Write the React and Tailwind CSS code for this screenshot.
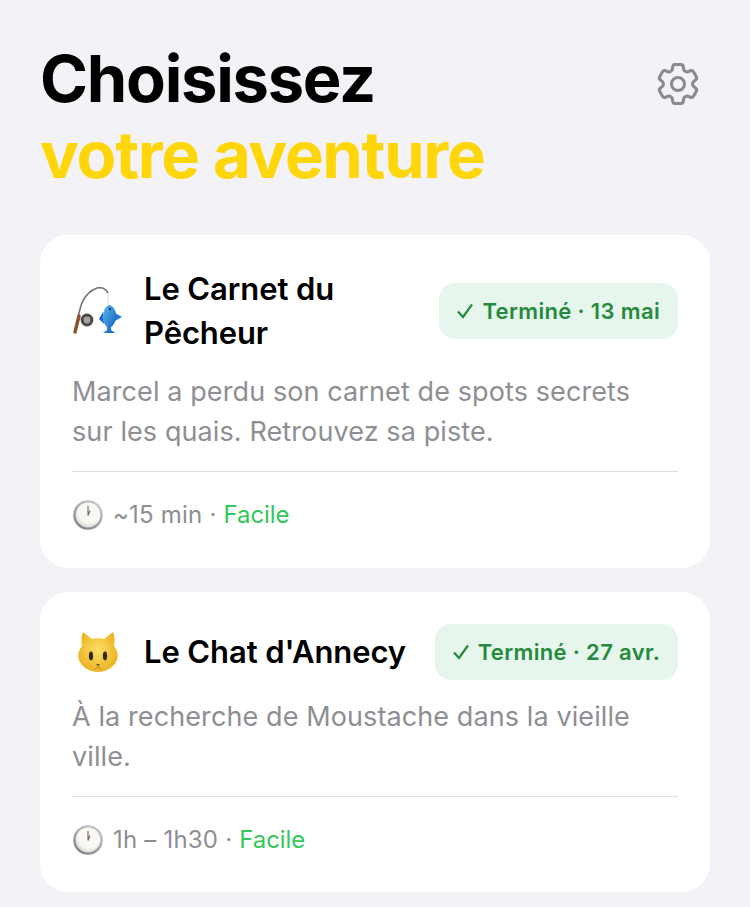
const FishingIcon = () => (
  <svg width="50" height="50" viewBox="0 0 50 50" className="shrink-0">
    <defs>
      <linearGradient id="fish" x1="0" y1="0" x2="1" y2="1">
        <stop offset="0" stopColor="#5cbcf6" />
        <stop offset="1" stopColor="#0d59b8" />
      </linearGradient>
    </defs>
    <path d="M6 32 C8 22 10 8 25 2 C30 1 34 3 36 7" fill="none" stroke="#76706a" strokeWidth="1.6" />
    <path d="M36 7 V20" stroke="#c8c8c8" strokeWidth="0.7" />
    <path d="M7 30 L3 46" stroke="#8f4f28" strokeWidth="3.4" strokeLinecap="round" />
    <circle cx="15" cy="34" r="6.4" fill="#4d4946" />
    <circle cx="15" cy="34" r="3.4" fill="#a3a3a3" />
    <path d="M27 33 L31 26 L32 38 Z" fill="#1a67c8" />
    <path d="M43 27 L50 31 L43 35 Z" fill="#2379d8" />
    <path d="M37 19 C42 20 45 26 44 32 C43 37 41 40 39 41 L39 44 L43 47 L31 47 L35 44 L35 41 C32 38 30 33 31 28 C32 23 34 20 37 19 Z" fill="url(#fish)" />
    <circle cx="38" cy="23" r="1.2" fill="#0b2f66" />
  </svg>
);

const CatIcon = () => (
  <svg width="50" height="50" viewBox="0 0 50 50" className="shrink-0">
    <defs>
      <radialGradient id="cat" cx="0.5" cy="0.45" r="0.65">
        <stop offset="0" stopColor="#fde068" />
        <stop offset="1" stopColor="#e8ab14" />
      </radialGradient>
    </defs>
    <path d="M11 5 L20 12 C23 11 29 11 32 12 L41 5 C43 10 43 15 42 19 C46 24 47 30 44 35 C41 41 33 45 26 45 C19 45 11 41 8 35 C5 30 6 24 10 19 C9 15 9 10 11 5 Z" fill="url(#cat)" />
    <path d="M12.5 9 L17 13 L13 16 Z" fill="#f1bd2a" />
    <path d="M39.5 9 L35 13 L39 16 Z" fill="#f1bd2a" />
    <ellipse cx="19" cy="29" rx="2.1" ry="4.4" fill="#2e2a22" />
    <ellipse cx="33" cy="29" rx="2.1" ry="4.4" fill="#2e2a22" />
    <path d="M23.8 37 H28.2 L26 39.5 Z" fill="#75654a" />
    <path d="M22.5 42 C24 42.5 25 41 26 39.5 C27 41 28 42.5 29.5 42" fill="none" stroke="#b0841a" strokeWidth="0.9" />
  </svg>
);

const ClockIcon = () => (
  <svg width="30" height="30" viewBox="0 0 30 30" className="shrink-0">
    <defs>
      <linearGradient id="rim" x1="0.8" y1="0" x2="0.2" y2="1">
        <stop offset="0" stopColor="#c9ccd1" />
        <stop offset="1" stopColor="#7d8085" />
      </linearGradient>
      <radialGradient id="face" cx="0.55" cy="0.4" r="0.7">
        <stop offset="0.6" stopColor="#faf8f3" />
        <stop offset="1" stopColor="#cfcac2" />
      </radialGradient>
    </defs>
    <circle cx="15" cy="15" r="14.8" fill="url(#rim)" />
    <circle cx="15" cy="15" r="12.4" fill="url(#face)" />
    <path d="M15 6 V15.5 L17 10.5" fill="none" stroke="#6b665f" strokeWidth="1.1" />
  </svg>
);

const GearIcon = () => (
  <svg width="52" height="52" viewBox="0 0 24 24" fill="none" stroke="#8a8a8e" strokeWidth="1.4" strokeLinecap="round" strokeLinejoin="round">
    <path d="M9.594 3.94c.09-.542.56-.94 1.11-.94h2.593c.55 0 1.02.398 1.11.94l.213 1.281c.063.374.313.686.645.87.074.04.147.083.22.127.325.196.72.257 1.075.124l1.217-.456a1.125 1.125 0 0 1 1.37.49l1.296 2.247a1.125 1.125 0 0 1-.26 1.431l-1.003.827c-.293.241-.438.613-.43.992a7.723 7.723 0 0 1 0 .255c-.008.378.137.75.43.991l1.004.827c.424.35.534.955.26 1.43l-1.298 2.247a1.125 1.125 0 0 1-1.369.491l-1.217-.456c-.355-.133-.75-.072-1.076.124a6.47 6.47 0 0 1-.22.128c-.331.183-.581.495-.644.869l-.213 1.281c-.09.543-.56.94-1.11.94h-2.594c-.55 0-1.019-.398-1.11-.94l-.213-1.281c-.062-.374-.312-.686-.644-.87a6.52 6.52 0 0 1-.22-.127c-.325-.196-.72-.257-1.076-.124l-1.217.456a1.125 1.125 0 0 1-1.369-.49l-1.297-2.247a1.125 1.125 0 0 1 .26-1.431l1.004-.827c.292-.24.437-.613.43-.991a6.932 6.932 0 0 1 0-.255c.007-.38-.138-.751-.43-.992l-1.004-.827a1.125 1.125 0 0 1-.26-1.43l1.297-2.247a1.125 1.125 0 0 1 1.37-.491l1.216.456c.356.133.751.072 1.076-.124.072-.044.146-.086.22-.128.332-.183.582-.495.644-.869l.214-1.28Z" />
    <circle cx="12" cy="12" r="3" />
  </svg>
);

const CheckMark = () => (
  <svg width="16" height="16" viewBox="0 0 16 16" fill="none" stroke="#248a3d" strokeWidth="2.2" className="shrink-0">
    <path d="M1 8.5 L6 14 L15 1.5" />
  </svg>
);

const adventures = [
  {
    icon: <FishingIcon />,
    title: 'Le Carnet du Pêcheur',
    status: 'Terminé · 13 mai',
    description: 'Marcel a perdu son carnet de spots secrets sur les quais. Retrouvez sa piste.',
    duration: '~15 min',
    level: 'Facile',
  },
  {
    icon: <CatIcon />,
    title: "Le Chat d'Annecy",
    status: 'Terminé · 27 avr.',
    description: 'À la recherche de Moustache dans la vieille ville.',
    duration: '1h – 1h30',
    level: 'Facile',
  },
];

const AdventureCard = ({ adventure }) => (
  <div className="bg-white rounded-[28px] px-8 pt-8 pb-[38px] last:pb-[37px]">
    <div className="flex items-center gap-[22px]">
      {adventure.icon}
      <h2 className="flex-1 text-[31px] leading-[44px] font-[580] text-black tracking-[-0.1px]">{adventure.title}</h2>
      <span className="flex items-center gap-[9px] h-14 px-[18px] rounded-2xl bg-[#e6f6ec] text-[#248a3d] text-[22px] font-semibold tracking-[0.35px] whitespace-nowrap">
        <CheckMark />
        {adventure.status}
      </span>
    </div>
    <p className="mt-[17px] text-[27px] leading-[40px] tracking-[0.1px] text-[#8e8e93]">{adventure.description}</p>
    <div className="mt-[19px] border-t border-[#e0e0e3] pt-7 pl-px flex items-center gap-[10px] text-[24px] leading-[30px] tracking-[0.2px] text-[#8e8e93]">
      <ClockIcon />
      <span>
        {adventure.duration}
        <span className="mx-[7px]">·</span>
        <span className="text-[#34c759] tracking-[-0.1px]">{adventure.level}</span>
      </span>
    </div>
  </div>
);

export default function App() {
  return (
    <div className="h-[907px] overflow-hidden bg-[#f2f2f7] px-10 pt-[41px] font-['Inter','Liberation_Sans',sans-serif]">
      <header className="flex items-start justify-between">
        <h1 className="text-[65px] leading-[76px] font-bold tracking-[-1.25px] text-black">
          Choisissez
          <br />
          <span className="text-[#ffd60a]">votre aventure</span>
        </h1>
        <div className="mt-[17px] mr-[6px]"><GearIcon /></div>
      </header>
      <div className="mt-[42px] flex flex-col gap-6">
        {adventures.map((adventure) => (
          <AdventureCard key={adventure.title} adventure={adventure} />
        ))}
      </div>
    </div>
  );
}
